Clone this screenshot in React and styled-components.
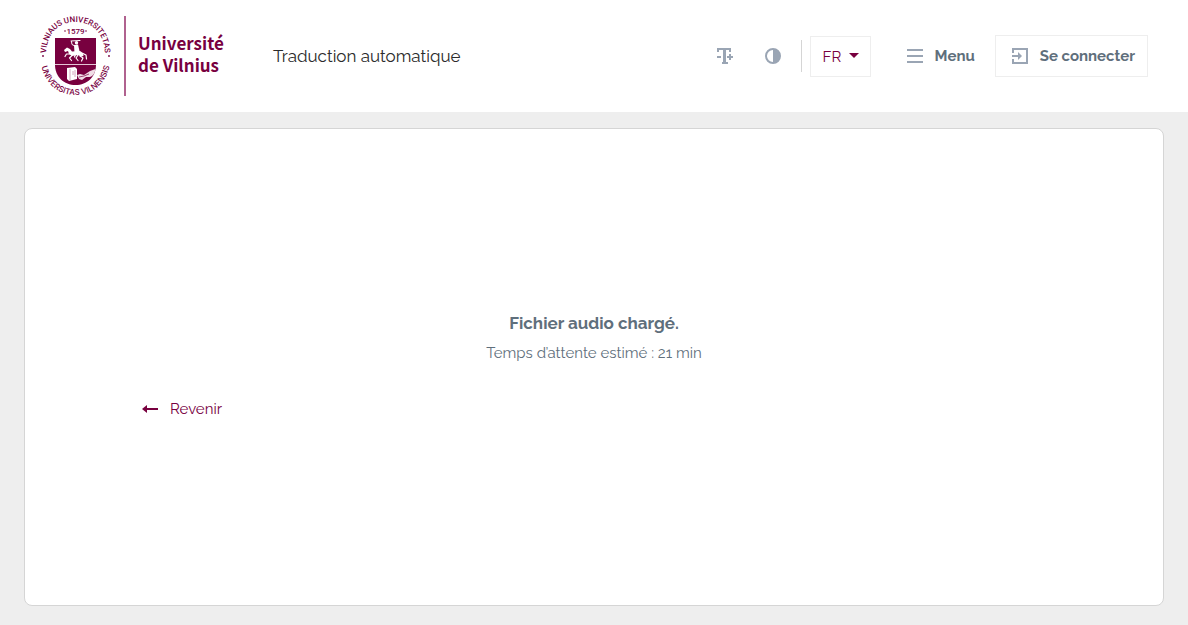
import React from "react";
import styled, { createGlobalStyle } from "styled-components";

const wine = "#78003f";
const slate = "#5f6f7c";
const iconGrey = "#9aa5b4";

const GlobalStyle = createGlobalStyle`
  * { box-sizing: border-box; }
  body {
    margin: 0;
    background: #eeeeee;
    color: ${slate};
    font-family: Raleway, Lato, "Open Sans", sans-serif;
    font-size: 15px;
    line-height: 24px;
  }
  button, select { font: inherit; color: inherit; cursor: pointer; }
  svg { display: block; flex: none; }
`;

const Page = styled.div`
  min-height: 100vh;
  display: flex;
  flex-direction: column;
`;

const Header = styled.header`
  min-height: 112px;
  padding: 0 40px;
  display: flex;
  align-items: center;
  background: #ffffff;
`;

const Brand = styled.a`
  display: flex;
  align-items: center;
  color: ${wine};
  text-decoration: none;
`;

const BrandRule = styled.span`
  width: 2px;
  height: 80px;
  margin: 0 12px;
  background: #b0628f;
`;

const BrandName = styled.span`
  font: 700 17px/22px "Source Sans Pro", "Noto Sans CJK JP", sans-serif;
  padding-bottom: 4px;
`;

const AppTitle = styled.h1`
  margin: 0 auto 0 49px;
  font-size: 17px;
  font-weight: 400;
  color: #2b2b2b;
`;

const Tools = styled.div`
  display: flex;
  align-items: center;
`;

const IconButton = styled.button`
  width: 48px;
  height: 40px;
  padding: 0;
  border: 0;
  background: none;
  display: grid;
  place-items: center;
`;

const ToolRule = styled.span`
  width: 1px;
  height: 32px;
  margin: 0 8px 0 4px;
  background: #d5d5d5;
`;

const Language = styled.label`
  display: grid;
  align-items: center;
  width: 61px;
  color: ${wine};

  > * { grid-area: 1 / 1; }
  > svg { justify-self: end; margin: 0 12px 2px 0; pointer-events: none; }
`;

const LanguageSelect = styled.select`
  appearance: none;
  width: 100%;
  height: 41px;
  padding: 2px 12px 0;
  border: 1px solid #eeeeee;
  border-radius: 0;
  background: #ffffff;
`;

const TextButton = styled.button`
  height: 42px;
  padding: 0 ${(p) => (p.$framed ? "12px 0 16px" : "0")};
  border: ${(p) => (p.$framed ? "1px solid #eeeeee" : "0")};
  margin-left: ${(p) => (p.$framed ? "20px" : "36px")};
  background: #ffffff;
  display: flex;
  align-items: center;
  gap: 12px;
  font-weight: 700;
`;

const Main = styled.main`
  flex: 1;
  display: flex;
  padding: 16px 24px 19px;
`;

const Card = styled.section`
  flex: 1;
  display: flex;
  flex-direction: column;
  justify-content: center;
  padding: 24px 10% 27px;
  border: 1px solid #d5d5d5;
  border-radius: 8px;
  background: #ffffff;
`;

const StatusTitle = styled.h2`
  margin: 0 0 6px;
  font-size: 17px;
  font-weight: 700;
  line-height: 24px;
  text-align: center;
`;

const StatusText = styled.p`
  margin: 0 0 32px;
  text-align: center;
`;

const BackLink = styled.a`
  align-self: flex-start;
  display: flex;
  align-items: center;
  gap: 12px;
  margin-left: 3px;
  color: ${wine};
  text-decoration: none;
`;

const SealText = styled.text`
  font: 500 8px ${(p) => (p.$wide ? "Inter" : "Roboto")}, sans-serif;
  fill: ${wine};
`;

function Seal() {
  return (
    <svg width="72" height="82" viewBox="0 0 72 82" role="img" aria-label="Vilniaus universitetas">
      <defs>
        <path id="seal-top" d="M6 41C6 19 18 7 35.500 7S65 19 65 41" />
        <path id="seal-bottom" d="M0.500 41C0.500 64 15 80 35.500 80S70.500 64 70.500 41" />
      </defs>
      <SealText textAnchor="middle">
        <textPath href="#seal-top" startOffset="50%">VILNIAUS UNIVERSITETAS</textPath>
      </SealText>
      <SealText $wide textAnchor="middle">
        <textPath href="#seal-bottom" startOffset="50%">UNIVERSITAS VILNENSIS</textPath>
      </SealText>
      <SealText x="35.500" y="19" textAnchor="middle">1579</SealText>
      <g fill={wine}>
        <circle cx="25" cy="16" r="0.800" />
        <circle cx="46" cy="16" r="0.800" />
        <circle cx="3" cy="41" r="0.900" />
        <circle cx="69" cy="41" r="0.900" />
        <path d="M15 23H56V49.500C56 62 47 70 35.500 70S15 62 15 49.500Z" />
      </g>
      <path d="M15 49.500H56" stroke="#e4c4d4" strokeWidth="1" />
      <g fill="#fff">
        <path d="M24 35L27 32.500L30 34L32 36.500L40 36L43 38L43.500 41L41 41.500L38 40L32 41L29 39L28 36L25 37Z" />
        <path d="M34 30L38 29.500L39.500 36L37 39L34.500 38Z" />
        <circle cx="36.500" cy="27.800" r="1.700" />
      </g>
      <g fill="none" stroke="#fff" strokeLinecap="round" strokeLinejoin="round">
        <path d="M31 26L40 25.500M35 31L32 29.500L31.500 26.500" />
        <path d="M30 39L26.500 39L25 41.500M32 40.500L29.500 43L31.500 45.500M40 41L43 43L41.500 46M38 40L36 43L38 45.500M43 38.500L46 40L46.500 44" strokeWidth="1.200" />
        <path d="M36 38L34.500 42" strokeWidth="1.200" />
      </g>
      <path d="M27 53L35 52L37 54V64L29 66L27 64Z" fill="#fff" />
      <path d="M30 54V65M33 56V60M35 55V62" fill="none" stroke="#c991ac" strokeWidth="0.800" />
      <path d="M37 60L40 59L44 60L50 56L55.500 54C55 58 53 61 50 62L46 62L42 65L39 64Z" fill="#f0dde6" />
      <path d="M39 62L44 61L49 59" fill="none" stroke={wine} strokeWidth="0.700" />
    </svg>
  );
}

const TextSizeIcon = () => (
  <svg width="16" height="16" viewBox="0 0 16 16" fill="none" stroke={iconGrey} aria-hidden="true">
    <path d="M1 4V1H13V4M5 15H11" strokeWidth="2" />
    <path d="M7.500 1V15" strokeWidth="3" />
    <path d="M0 9H4M10 9H16M13 6V12" strokeWidth="2" />
  </svg>
);

const ContrastIcon = () => (
  <svg width="16" height="16" viewBox="0 0 16 16" aria-hidden="true">
    <circle cx="8" cy="8" r="7" fill="none" stroke={iconGrey} strokeWidth="2" />
    <path d="M8 1A7 7 0 0 1 8 15Z" fill={iconGrey} />
  </svg>
);

const MenuIcon = () => (
  <svg width="16" height="14" viewBox="0 0 16 14" fill={iconGrey} aria-hidden="true">
    <path d="M0 0H16V2H0ZM0 6H16V8H0ZM0 12H16V14H0Z" />
  </svg>
);

const LoginIcon = () => (
  <svg width="16" height="16" viewBox="0 0 16 16" aria-hidden="true">
    <path d="M1 5V1H15V15H1V11M0 8H8" fill="none" stroke={iconGrey} strokeWidth="2" />
    <path d="M6 4L10 8L6 12Z" fill={iconGrey} />
  </svg>
);

const CaretIcon = () => (
  <svg width="10" height="5" viewBox="0 0 10 5" aria-hidden="true">
    <path d="M0 0H10L5 5Z" fill={wine} />
  </svg>
);

const BackIcon = () => (
  <svg width="16" height="8" viewBox="0 0 16 8" aria-hidden="true">
    <path d="M0 4L5 0V3H16V5H5V8Z" fill={wine} />
  </svg>
);

export default function App() {
  return (
    <Page>
      <GlobalStyle />
      <Header>
        <Brand href="#">
          <Seal />
          <BrandRule />
          <BrandName>
            Université
            <br />
            de Vilnius
          </BrandName>
        </Brand>
        <AppTitle>Traduction automatique</AppTitle>
        <Tools>
          <IconButton type="button" aria-label="Taille du texte">
            <TextSizeIcon />
          </IconButton>
          <IconButton type="button" aria-label="Contraste">
            <ContrastIcon />
          </IconButton>
          <ToolRule />
          <Language>
            <LanguageSelect aria-label="Langue" defaultValue="fr">
              <option value="fr">FR</option>
            </LanguageSelect>
            <CaretIcon />
          </Language>
          <TextButton type="button">
            <MenuIcon />
            Menu
          </TextButton>
          <TextButton type="button" $framed>
            <LoginIcon />
            Se connecter
          </TextButton>
        </Tools>
      </Header>
      <Main>
        <Card>
          <StatusTitle>Fichier audio chargé.</StatusTitle>
          <StatusText>Temps d’attente estimé : 21 min</StatusText>
          <BackLink href="#">
            <BackIcon />
            Revenir
          </BackLink>
        </Card>
      </Main>
    </Page>
  );
}
